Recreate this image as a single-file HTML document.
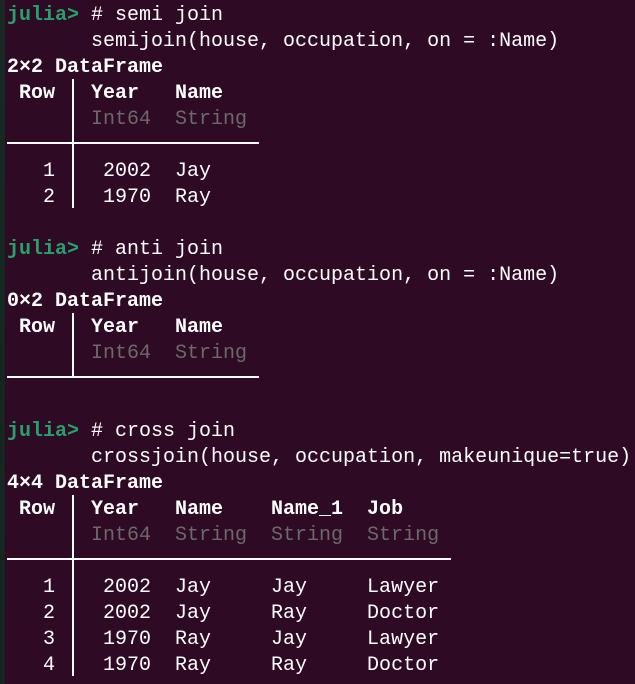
<!DOCTYPE html>
<html><head><meta charset="utf-8"><style>
html,body{margin:0;padding:0;}
body{width:635px;height:684px;background:#2f0a24;position:relative;overflow:hidden;
font-family:"Liberation Mono","DejaVu Sans Mono",monospace;font-size:20px;color:#ffffff;}
.strip{position:absolute;left:0;top:0;width:5px;height:684px;background:linear-gradient(#1a2824,#13281f 40%,#182420);}
.l{position:absolute;left:7px;height:26px;line-height:26px;white-space:pre;margin-top:2px;}
.g{color:#26a269;font-weight:bold;}
.b{font-weight:bold;}
.d{color:#6a6a6a;}
.h{position:absolute;height:2px;background:#fff;left:7px;}
.v{position:absolute;width:2px;background:#fff;left:72px;}
</style></head><body>
<div class="strip"></div>
<div class="l" style="top:1px"><span class="g">julia&gt;</span> # semi join</div>
<div class="l" style="top:27px">       semijoin(house, occupation, on = :Name)</div>
<div class="l b" style="top:53px">2×2 DataFrame</div>
<div class="l b" style="top:79px"> Row   Year   Name</div>
<div class="l d" style="top:105px">       Int64  String</div>
<div class="h" style="top:142px;width:252px"></div>
<div class="l" style="top:157px">   1    2002  Jay</div>
<div class="l" style="top:183px">   2    1970  Ray</div>
<div class="v" style="top:79px;height:129px"></div>

<div class="l" style="top:235px"><span class="g">julia&gt;</span> # anti join</div>
<div class="l" style="top:261px">       antijoin(house, occupation, on = :Name)</div>
<div class="l b" style="top:287px">0×2 DataFrame</div>
<div class="l b" style="top:313px"> Row   Year   Name</div>
<div class="l d" style="top:339px">       Int64  String</div>
<div class="h" style="top:376px;width:252px"></div>
<div class="v" style="top:313px;height:65px"></div>

<div class="l" style="top:417px"><span class="g">julia&gt;</span> # cross join</div>
<div class="l" style="top:443px">       crossjoin(house, occupation, makeunique=true)</div>
<div class="l b" style="top:469px">4×4 DataFrame</div>
<div class="l b" style="top:495px"> Row   Year   Name    Name_1  Job</div>
<div class="l d" style="top:521px">       Int64  String  String  String</div>
<div class="h" style="top:558px;width:444px"></div>
<div class="l" style="top:573px">   1    2002  Jay     Jay     Lawyer</div>
<div class="l" style="top:599px">   2    2002  Jay     Ray     Doctor</div>
<div class="l" style="top:625px">   3    1970  Ray     Jay     Lawyer</div>
<div class="l" style="top:651px">   4    1970  Ray     Ray     Doctor</div>
<div class="v" style="top:495px;height:181px"></div>
</body></html>
